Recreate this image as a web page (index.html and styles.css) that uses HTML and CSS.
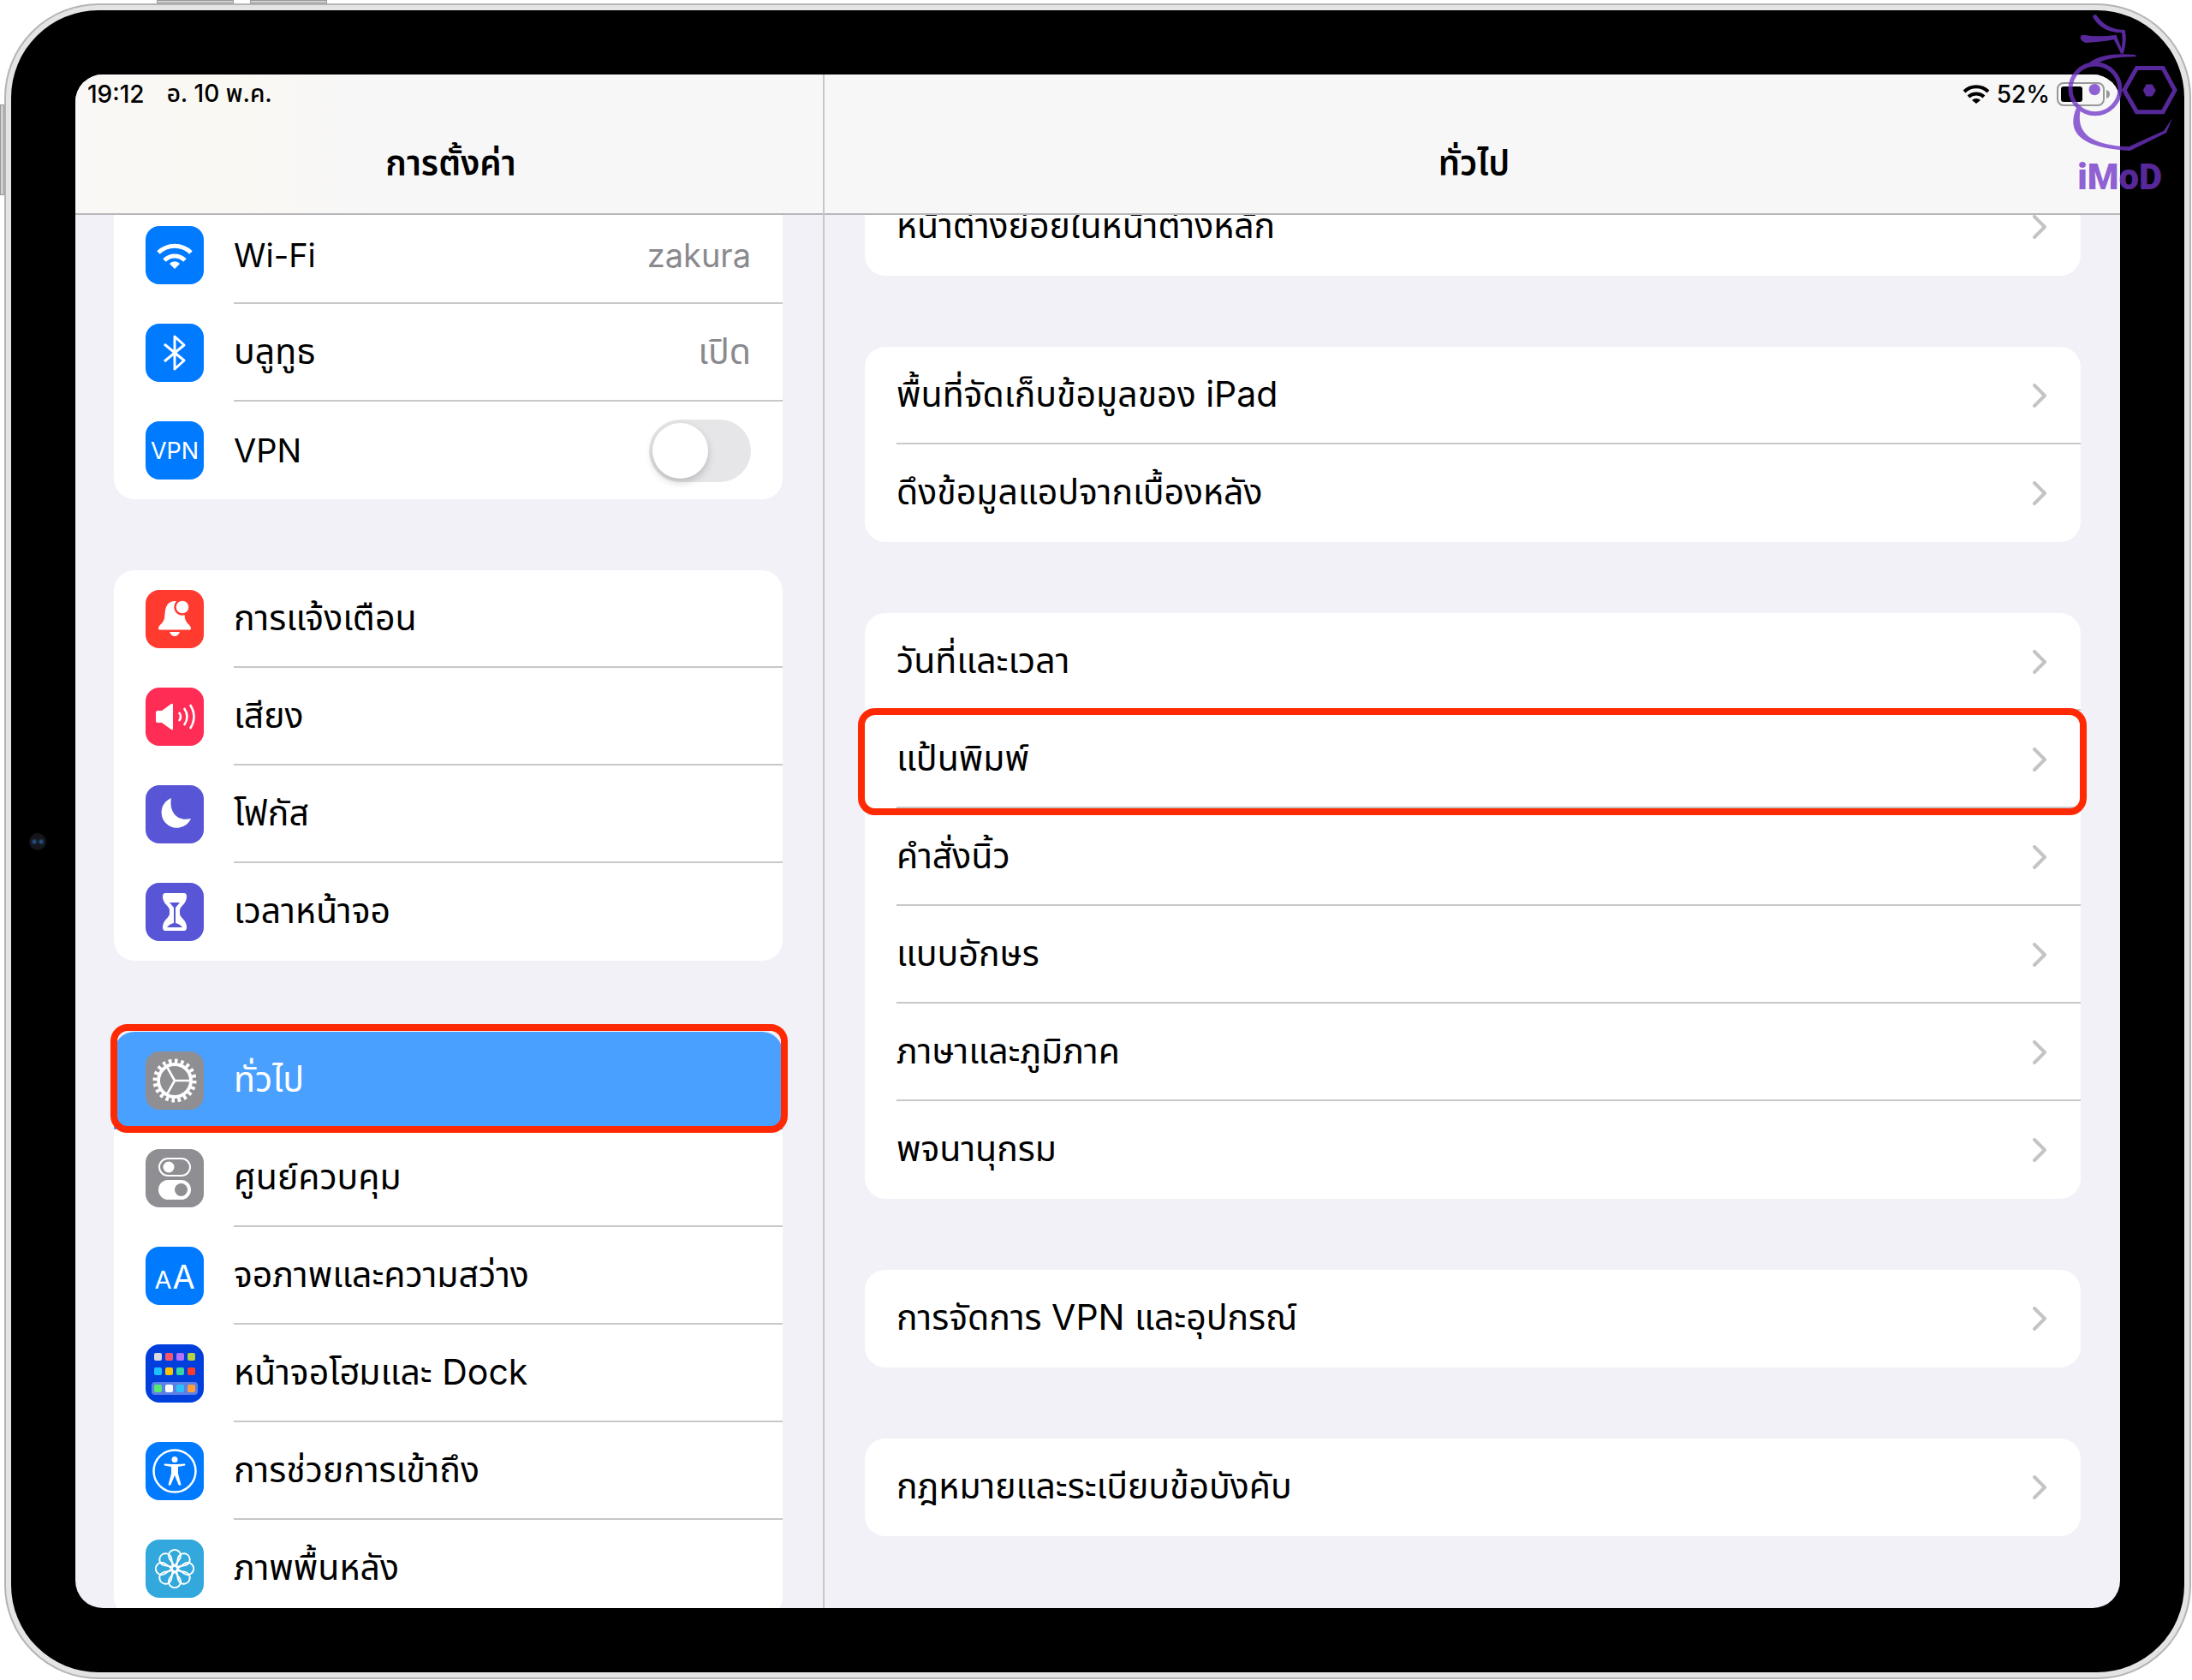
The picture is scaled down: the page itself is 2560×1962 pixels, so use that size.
FILE: index.html
```
<!DOCTYPE html>
<html lang="th">
<head>
    <meta charset="UTF-8">
    <meta name="viewport" content="width=device-width, initial-scale=1.0">
    <title>การตั้งค่า</title>
    <link rel="stylesheet" href="styles.css">
</head>
<body>

<div class="device">
    <span class="hw-button volume-one"></span>
    <span class="hw-button volume-two"></span>
    <span class="hw-button pencil"></span>
    <div class="bezel">
        <span class="camera"></span>
        <div class="screen">

            <aside class="pane sidebar">
                <header class="bar">
                    <div class="status">
                        <span>19:12</span>
                        <span>อ. 10 พ.ค.</span>
                    </div>
                    <h1 class="title">การตั้งค่า</h1>
                </header>
                <nav class="list">
                    <div class="card card-cut">
                        <a class="row" href="#wifi">
                            <svg class="icon blue" viewBox="0 0 68 68">
                                <path class="line" stroke-width="5" d="M15 31a27 27 0 0 1 38 0M22 40a17 17 0 0 1 24 0"/>
                                <path class="solid" d="M34 50l-6-6a8 8 0 0 1 12 0z"/>
                            </svg>
                            <span class="cell latin"><span>Wi-Fi</span><span class="value">zakura</span></span>
                        </a>
                        <a class="row" href="#bluetooth">
                            <svg class="icon blue" viewBox="0 0 68 68">
                                <path class="line" stroke-width="3" d="M22 24l23 19-11 10V15l11 10-23 19"/>
                            </svg>
                            <span class="cell"><span>บลูทูธ</span><span class="value">เปิด</span></span>
                        </a>
                        <div class="row">
                            <span class="icon blue icon-text">VPN</span>
                            <span class="cell latin">
                                <label for="vpn">VPN</label>
                                <input type="checkbox" class="switch" id="vpn">
                            </span>
                        </div>
                    </div>

                    <div class="card">
                        <a class="row" href="#notifications">
                            <svg class="icon red" viewBox="0 0 68 68">
                                <path class="solid" d="M34 13c-7 0-10 5-11 11l-1 9c-1 6-7 8-7 12q0 1.500 2 1.500h34q2 0 2-1.500c0-4-6-6-7-12l-1-9c-1-6-4-11-11-11zM28 49h12q-2 5-6 5t-6-5z"/>
                                <circle class="solid" cx="43" cy="20" r="8.500" stroke="#ff3b30" stroke-width="2.500"/>
                            </svg>
                            <span class="cell">การแจ้งเตือน</span>
                        </a>
                        <a class="row" href="#sounds">
                            <svg class="icon pink" viewBox="0 0 68 68">
                                <path class="solid" d="M12 29q0-2 2-2h5l11-8q2-1 2 1v28q0 2-2 1l-11-8h-5q-2 0-2-2z"/>
                                <path class="line" stroke-width="2.600" d="M39 29q4 5 0 10M45 24q7 10 0 20M52 20q9 14 0 28"/>
                            </svg>
                            <span class="cell">เสียง</span>
                        </a>
                        <a class="row" href="#focus">
                            <svg class="icon indigo" viewBox="0 0 68 68">
                                <path class="solid" d="M30 15A18 18 0 1 0 53 39C38 43 27 32 30 15z"/>
                            </svg>
                            <span class="cell">โฟกัส</span>
                        </a>
                        <a class="row" href="#screentime">
                            <svg class="icon indigo" viewBox="0 0 68 68">
                                <path class="solid" d="M23 12h22q3 0 3 4c0 9-8 11-8 16v4c0 5 8 7 8 16q0 4-3 4H23q-3 0-3-4c0-9 8-11 8-16v-4c0-5-8-7-8-16q0-4 3-4z"/>
                                <path fill="#5856d6" d="M28 23h12l-5 6v18q5 1 8 5H25q3-4 8-5V29z"/>
                            </svg>
                            <span class="cell">เวลาหน้าจอ</span>
                        </a>
                    </div>

                    <div class="card">
                        <a class="row row-active" href="#general">
                            <svg class="icon grey" viewBox="0 0 68 68">
                                <circle class="line" cx="34" cy="34" r="19" stroke-width="4"/>
                                <circle class="teeth" cx="34" cy="34" r="23" stroke-width="5" pathLength="40"/>
                                <path class="line" stroke-width="2.600" d="M34 34h17M34 34l-9-16M34 34l-9 16"/>
                            </svg>
                            <span class="cell">ทั่วไป</span>
                            <span class="marker marker-side"></span>
                        </a>
                        <a class="row" href="#control">
                            <svg class="icon grey" viewBox="0 0 68 68">
                                <rect class="line" x="16" y="11" width="36" height="20" rx="10" stroke-width="2"/>
                                <circle class="solid" cx="27" cy="21" r="6.500"/>
                                <rect class="solid" x="15" y="36" width="38" height="23" rx="11.500"/>
                                <circle fill="#8e8e93" cx="41.500" cy="47.500" r="7.500"/>
                            </svg>
                            <span class="cell">ศูนย์ควบคุม</span>
                        </a>
                        <a class="row" href="#display">
                            <span class="icon blue icon-text icon-letters"><small>A</small>A</span>
                            <span class="cell">จอภาพและความสว่าง</span>
                        </a>
                        <a class="row" href="#home">
                            <svg class="icon navy" viewBox="0 0 68 68">
                                <rect x="7" y="44" width="54" height="15" rx="4" fill="#5d80e8"/>
                                <g>
                                    <rect x="10" y="10" width="9" height="9" rx="2" fill="#d8dadf"/>
                                    <rect x="23" y="10" width="9" height="9" rx="2" fill="#ff5368"/>
                                    <rect x="36" y="10" width="9" height="9" rx="2" fill="#b572ff"/>
                                    <rect x="49" y="10" width="9" height="9" rx="2" fill="#b4d33f"/>
                                    <rect x="10" y="27" width="9" height="9" rx="2" fill="#1cc0ff"/>
                                    <rect x="23" y="27" width="9" height="9" rx="2" fill="#ffc400"/>
                                    <rect x="36" y="27" width="9" height="9" rx="2" fill="#35d6a4"/>
                                    <rect x="49" y="27" width="9" height="9" rx="2" fill="#ff3b2e"/>
                                    <rect x="10" y="47" width="9" height="9" rx="2" fill="#55ea6f"/>
                                    <rect x="23" y="47" width="9" height="9" rx="2" fill="#fff"/>
                                    <rect x="36" y="47" width="9" height="9" rx="2" fill="#2bc1ff"/>
                                    <rect x="49" y="47" width="9" height="9" rx="2" fill="#ff9f3a"/>
                                </g>
                            </svg>
                            <span class="cell">หน้าจอโฮมและ Dock</span>
                        </a>
                        <a class="row" href="#accessibility">
                            <svg class="icon blue" viewBox="0 0 68 68">
                                <circle class="line" cx="34" cy="34" r="24.500" stroke-width="2.500"/>
                                <circle class="solid" cx="34" cy="20.500" r="3.500"/>
                                <path class="solid" d="M22 25.500l9 .5h6l9-.5q1 1 0 2l-8 1.500v8l3.500 13q-1.500 1.500-3 0L34 39l-4.500 11q-1.500 1.500-3 0L30 37v-8l-8-1.500q-1-1 0-2z"/>
                            </svg>
                            <span class="cell">การช่วยการเข้าถึง</span>
                        </a>
                        <a class="row" href="#wallpaper">
                            <svg class="icon cyan" viewBox="0 0 68 68">
                                <defs><path id="petal" d="M34 31l-6-8.500a7 7 0 1 1 12 0z"/></defs>
                                <g class="line" stroke-width="2">
                                    <use href="#petal"/>
                                    <use href="#petal" transform="rotate(45 34 34)"/>
                                    <use href="#petal" transform="rotate(90 34 34)"/>
                                    <use href="#petal" transform="rotate(135 34 34)"/>
                                    <use href="#petal" transform="rotate(180 34 34)"/>
                                    <use href="#petal" transform="rotate(225 34 34)"/>
                                    <use href="#petal" transform="rotate(270 34 34)"/>
                                    <use href="#petal" transform="rotate(315 34 34)"/>
                                    <circle cx="34" cy="34" r="3.500"/>
                                </g>
                            </svg>
                            <span class="cell">ภาพพื้นหลัง</span>
                        </a>
                    </div>
                </nav>
            </aside>

            <main class="pane">
                <header class="bar">
                    <div class="status status-right">
                        <svg class="wifi" viewBox="0 0 32 24">
                            <path d="M2 9a20 20 0 0 1 28 0M7 15a13 13 0 0 1 18 0"/>
                            <path class="wifi-dot" d="M16 23l-5-4a7 7 0 0 1 10 0z"/>
                        </svg>
                        <span>52%</span>
                        <svg class="battery" viewBox="0 0 64 28">
                            <rect x="1" y="1" width="54" height="26" rx="7" fill="none" stroke="#979797" stroke-width="2"/>
                            <rect x="5" y="5" width="25" height="18" rx="3"/>
                            <path fill="#979797" d="M58 9q4 1 4 5t-4 5z"/>
                        </svg>
                    </div>
                    <h2 class="title">ทั่วไป</h2>
                </header>
                <div class="list list-detail">
                    <div class="card card-cut">
                        <a class="row" href="#pip"><span class="cell">หน้าต่างย่อยในหน้าต่างหลัก<svg class="chevron" viewBox="0 0 16 28"><path d="M2 2l12 12L2 26"/></svg></span></a>
                    </div>
                    <div class="card">
                        <a class="row" href="#storage"><span class="cell">พื้นที่จัดเก็บข้อมูลของ iPad<svg class="chevron" viewBox="0 0 16 28"><path d="M2 2l12 12L2 26"/></svg></span></a>
                        <a class="row" href="#refresh"><span class="cell">ดึงข้อมูลแอปจากเบื้องหลัง<svg class="chevron" viewBox="0 0 16 28"><path d="M2 2l12 12L2 26"/></svg></span></a>
                    </div>
                    <div class="card">
                        <a class="row" href="#date"><span class="cell">วันที่และเวลา<svg class="chevron" viewBox="0 0 16 28"><path d="M2 2l12 12L2 26"/></svg></span></a>
                        <a class="row" href="#keyboard">
                            <span class="cell">แป้นพิมพ์<svg class="chevron" viewBox="0 0 16 28"><path d="M2 2l12 12L2 26"/></svg></span>
                            <span class="marker marker-detail"></span>
                        </a>
                        <a class="row" href="#gestures"><span class="cell">คำสั่งนิ้ว<svg class="chevron" viewBox="0 0 16 28"><path d="M2 2l12 12L2 26"/></svg></span></a>
                        <a class="row" href="#fonts"><span class="cell">แบบอักษร<svg class="chevron" viewBox="0 0 16 28"><path d="M2 2l12 12L2 26"/></svg></span></a>
                        <a class="row" href="#language"><span class="cell">ภาษาและภูมิภาค<svg class="chevron" viewBox="0 0 16 28"><path d="M2 2l12 12L2 26"/></svg></span></a>
                        <a class="row" href="#dictionary"><span class="cell">พจนานุกรม<svg class="chevron" viewBox="0 0 16 28"><path d="M2 2l12 12L2 26"/></svg></span></a>
                    </div>
                    <div class="card">
                        <a class="row" href="#vpn-device"><span class="cell">การจัดการ VPN และอุปกรณ์<svg class="chevron" viewBox="0 0 16 28"><path d="M2 2l12 12L2 26"/></svg></span></a>
                    </div>
                    <div class="card">
                        <a class="row" href="#legal"><span class="cell">กฎหมายและระเบียบข้อบังคับ<svg class="chevron" viewBox="0 0 16 28"><path d="M2 2l12 12L2 26"/></svg></span></a>
                    </div>
                </div>
            </main>

        </div>
    </div>
</div>

<!-- iMoD watermark -->
<svg class="watermark" viewBox="520 40 400 640">
    <!-- antennae, brow, chin -->
    <path d="M613 60q2-10 12-8C645 80 670 105 727 106L730 130Q730 165 720 190L710 188Q720 160 716 116Q645 115 613 60z
             M570 134q0-12 12-11q50 10 114 0L720 185L712 187L688 140Q630 150 588 151Q572 145 570 134z
             M602 220Q650 182 764 193v7Q680 198 635 220z
             M558 375C520 460 560 520 745 530L872 467L893 416L863 460L740 516C610 510 550 470 572 380z"/>
    <!-- eyes -->
    <circle class="watermark-line" cx="622" cy="313" r="87"/>
    <circle cx="620" cy="315" r="20"/>
    <path class="watermark-line" d="M724 317l44-77h92l42 77-42 77h-92z"/>
    <path d="M790 318l11-21h22l12 21-12 21h-22z"/>
    <text x="560" y="665">iMoD</text>
</svg>

</body>
</html>
```
FILE: styles.css
```
:root {
    --tint: #007aff;
    --page: #f2f1f8;
    --line: #c8c8cb;
    --muted: #8a8a8e;
    --marker: #ff2a04;
    --imod: #7135c8;
}

* {
    box-sizing: border-box;
}

body {
    height: 100vh;
    margin: 0;
    padding: 4px 1px 1px 5px;
    background: #fff;
    color: #000;
    font-family: Inter, "Noto Sans Thai", "Noto Sans", sans-serif;
    font-size: 41px;
    overflow: hidden;
}

a {
    color: inherit;
    text-decoration: none;
}

/* Device */

.device {
    position: relative;
    height: 100%;
    padding: 6px;
    background: #e4e4e4;
    border: 2px solid #b4b4b4;
    border-radius: 110px;
}

.bezel {
    position: relative;
    height: 100%;
    padding: 75px;
    background: #000;
    border-radius: 102px;
}

.hw-button {
    position: absolute;
    background: #d0d0d0;
    border: 1px solid #999;
}

.volume-one,
.volume-two {
    top: -6px;
    width: 90px;
    height: 4px;
}

.volume-one {
    left: 176px;
}

.volume-two {
    left: 285px;
}

.pencil {
    top: 116px;
    left: -7px;
    width: 5px;
    height: 106px;
}

.camera {
    position: absolute;
    top: 50%;
    left: 21px;
    width: 20px;
    height: 20px;
    margin-top: -10px;
    border-radius: 50%;
    background:
        radial-gradient(circle at 6px 10px, #2a62a4 0, transparent 4px),
        radial-gradient(circle at 14px 10px, #2a62a4 0, transparent 4px),
        #14161c;
}

.screen {
    display: grid;
    grid-template-columns: 875px 1fr;
    height: 100%;
    background: var(--page);
    border-radius: 32px;
    overflow: hidden;
}

.pane {
    display: flex;
    flex-direction: column;
    min-width: 0;
    min-height: 0;
}

.sidebar {
    border-right: 2px solid var(--line);
}

/* Top bar */

.bar {
    flex: none;
    height: 164px;
    padding: 0 10px 0 14px;
    background: #f7f7f8;
    border-bottom: 2px solid #b8b8bb;
}

.sidebar .bar {
    background: linear-gradient(90deg, #f9f8f6, #faf8f2 20%, #f7f7f8 40%);
}

.status {
    display: flex;
    align-items: center;
    gap: 26px;
    height: 46px;
    font-size: 28px;
    font-weight: 500;
}

.status-right {
    justify-content: flex-end;
    gap: 8px;
}

.wifi {
    width: 32px;
    height: 24px;
    fill: none;
    stroke: #000;
    stroke-width: 4;
}

.wifi-dot {
    fill: #000;
    stroke: none;
}

.battery {
    width: 64px;
    height: 28px;
}

.title {
    margin: 0;
    padding-top: 30px;
    font-size: 40px;
    line-height: 56px;
    font-weight: 600;
    text-align: center;
}

/* Lists */

.list {
    flex: 1;
    display: flex;
    flex-direction: column;
    gap: 83px;
    min-height: 0;
    padding: 0 47px 0 45px;
    overflow: hidden;
}

.list-detail {
    padding: 0 46px 0 47px;
}

.card {
    flex: none;
    background: #fff;
    border-radius: 24px;
}

/* first card is scrolled partly under the bar */
.card-cut {
    margin-top: -10px;
    border-radius: 0 0 24px 24px;
}

.list-detail .card-cut {
    margin-top: -43px;
}

.row {
    position: relative;
    display: flex;
    align-items: center;
    gap: 35px;
    height: 114px;
    padding-left: 37px;
}

.cell {
    flex: 1;
    display: flex;
    align-items: center;
    justify-content: space-between;
    height: 100%;
    padding-top: 2px;
    padding-right: 37px;
    border-bottom: 2px solid var(--line);
}

.latin {
    font-size: 38px;
}

.list-detail .cell {
    padding-right: 40px;
}

.row:last-child .cell {
    border-bottom-color: transparent;
}

.row-active {
    background: #4aa0ff;
    border-radius: 24px 24px 0 0;
    color: #fff;
}

.row-active .cell {
    border-bottom-color: transparent;
}

.value {
    color: var(--muted);
}

.chevron {
    width: 16px;
    height: 28px;
    fill: none;
    stroke: #c4c4c6;
    stroke-width: 4;
    stroke-linecap: round;
    stroke-linejoin: round;
}

/* Red frames drawn over the chosen rows */

.marker {
    position: absolute;
    border: 8px solid var(--marker);
    border-radius: 20px;
}

.marker-side {
    inset: -9px -6px -4px -4px;
}

.marker-detail {
    inset: -3px -7px -8px -8px;
}

/* Row icons */

.icon {
    flex: none;
    width: 68px;
    height: 68px;
    border-radius: 16px;
}

.icon-text {
    display: flex;
    align-items: center;
    justify-content: center;
    color: #fff;
    font-size: 27px;
}

.icon-letters {
    align-items: baseline;
    gap: 1px;
    font-size: 38px;
    line-height: 70px;
}

.icon-letters small {
    font-size: 29px;
}

.line {
    fill: none;
    stroke: #fff;
    stroke-linejoin: round;
}

.solid {
    fill: #fff;
}

.teeth {
    fill: none;
    stroke: #fff;
    stroke-dasharray: 1 1;
}

.blue {
    background: var(--tint);
}

.red {
    background: #ff3b30;
}

.pink {
    background: #ff2d55;
}

.indigo {
    background: #5856d6;
}

.grey {
    background: #8e8e93;
}

.navy {
    background: #003fdc;
}

.cyan {
    background: #32a8dc;
}

/* VPN switch */

.switch {
    appearance: none;
    position: relative;
    width: 119px;
    height: 73px;
    margin: 0;
    background: #e6e6e8;
    border-radius: 37px;
}

.switch::before {
    content: "";
    position: absolute;
    top: 4px;
    left: 4px;
    width: 65px;
    height: 65px;
    background: #fff;
    border-radius: 50%;
    box-shadow: 0 4px 10px rgba(0, 0, 0, 0.2);
}

.switch:checked {
    background: #34c759;
}

.switch:checked::before {
    left: 50px;
}

.watermark {
    position: absolute;
    top: 13px;
    right: 14px;
    width: 133px;
    height: 213px;
    fill: var(--imod);
    opacity: 0.77;
}

.watermark-line {
    fill: none;
    stroke: var(--imod);
    stroke-width: 15;
}

.watermark text {
    font-family: Roboto, sans-serif;
    font-size: 126px;
    font-weight: 900;
}
```
